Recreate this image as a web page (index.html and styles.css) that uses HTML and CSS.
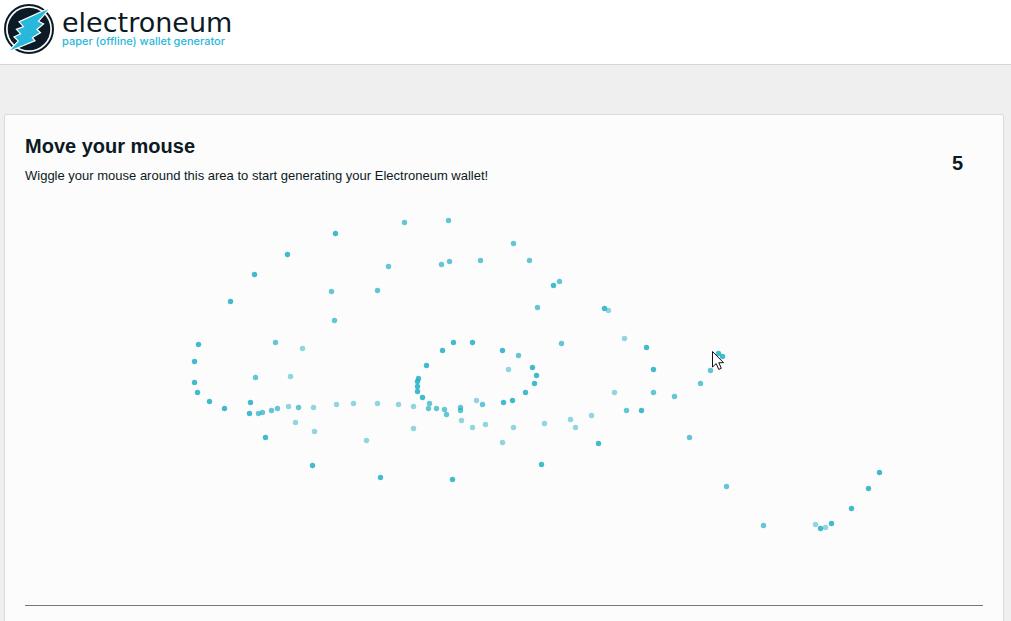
FILE: index.html
```
<!DOCTYPE html>
<html lang="en">
<head>
  <meta charset="UTF-8">
  <title>Electroneum Paper Wallet Generator</title>
  <meta name="viewport" content="width=device-width, initial-scale=1">
  <link rel="stylesheet" href="styles.css">
</head>

<body>
  <header class="site-header">
    <svg class="logo-mark" viewBox="0 0 52 52" aria-hidden="true">
      <circle cx="26" cy="26" r="24" fill="#fff" stroke="#0b1a24" stroke-width="2"/>
      <circle cx="26" cy="26" r="21.3" fill="#0b1a24"/>
      <path d="M45.5 6 L17 19 L21.5 24 L14.5 26.5 L18.5 31 L12 34 L16 38 L7 47.5 L31 37.5 L28.5 34.5 L36.5 29.5 L33 26.5 L39.5 21 L34.5 18.5 Z" fill="#2ab7dc" stroke="#fff" stroke-width="2.4" paint-order="stroke"/>
    </svg>
    <div class="logo-text">
      <div class="logo-name">electroneum</div>
      <div class="logo-tagline">paper (offline) wallet generator</div>
    </div>
  </header>

  <main class="panel">
    <div class="panel-head">
      <div>
        <h1>Move your mouse</h1>
        <p>Wiggle your mouse around this area to start generating your Electroneum wallet!</p>
      </div>
      <div id="counter">5</div>
    </div>

    <!-- Mouse trail, points are in client coordinates -->
    <svg id="trail" viewBox="25 200 958 405" preserveAspectRatio="xMinYMin meet" aria-hidden="true">
      <g id="dots" transform="translate(0.5 0.5)"></g>
      <path class="cursor" transform="translate(712 351)" d="M0.5 0.5 V16 L4.2 12.6 L6.8 18.4 L9.3 17.3 L6.8 11.7 H11.5 Z"/>
    </svg>
    <hr>
  </main>

  <script>
    const points = {
      light: [
        [302,348],[608,310],[624,338],[288,406],[313,407],[336,404],[353,403],[377,403],[398,404],
        [413,406],[295,422],[314,431],[366,440],[290,376],[413,428],[461,420],[472,427],[485,424],
        [476,400],[508,369],[513,427],[502,442],[544,423],[570,419],[575,427],[591,415],[614,392],
        [815,524],[825,527]
      ],
      mid: [
        [404,222],[388,266],[377,290],[331,291],[334,320],[275,342],[448,220],[513,243],[441,264],
        [449,261],[480,260],[529,260],[559,281],[537,307],[561,343],[258,413],[262,412],[271,410],
        [277,408],[298,407],[255,377],[429,403],[428,408],[436,408],[444,409],[446,414],[460,407],
        [460,410],[482,404],[518,355],[626,410],[653,392],[674,396],[689,437],[700,383],[710,370],
        [726,486],[763,525]
      ],
      strong: [
        [335,233],[287,254],[254,274],[230,301],[198,344],[553,285],[604,308],[453,342],[472,342],
        [194,361],[194,382],[197,392],[209,401],[224,408],[250,402],[249,413],[265,437],[312,465],
        [380,477],[442,350],[426,365],[418,378],[417,381],[417,386],[417,391],[422,397],[503,402],
        [512,400],[525,392],[534,383],[536,375],[532,367],[502,350],[541,464],[452,479],[598,443],
        [641,410],[646,347],[653,369],[718,353],[722,356],[820,528],[831,523],[851,508],[868,488],
        [879,472]
      ]
    };

    const dots = document.getElementById("dots");
    for (const age in points) {
      points[age].forEach(([x, y]) => {
        const dot = document.createElementNS("http://www.w3.org/2000/svg", "circle");
        dot.setAttribute("class", age);
        dot.setAttribute("cx", x);
        dot.setAttribute("cy", y);
        dot.setAttribute("r", 2.7);
        dots.appendChild(dot);
      });
    }
  </script>
</body>
</html>
```
FILE: styles.css
```
* { box-sizing: border-box; margin: 0; padding: 0; }

body {
  font-family: "Liberation Sans", Arial, sans-serif;
  font-size: 13px;
  background: #efefef;
  color: #0b1a24;
  overflow: hidden;
}

.site-header {
  display: flex;
  align-items: flex-start;
  gap: 7px;
  height: 65px;
  padding: 3px;
  background: #fff;
  border-bottom: 1px solid #d6d6d6;
}

.logo-mark {
  width: 52px;
  height: 52px;
}

.logo-text { padding-top: 9px; }

.logo-name {
  font-family: "DejaVu Sans", sans-serif;
  font-size: 27px;
  line-height: 22px;
}

.logo-tagline {
  font-family: Inter, sans-serif;
  font-size: 11px;
  font-weight: 500;
  line-height: 14px;
  color: #2ab7dc;
}

/* Panel */
.panel {
  margin: 49px 7px 0 4px;
  padding: 19px 20px 40px;
  background: #fcfcfc;
  border: 1px solid #dadada;
  border-radius: 2px;
}

.panel-head {
  display: flex;
  justify-content: space-between;
  height: 66px;
}

h1 {
  font-size: 20px;
  line-height: 24px;
  margin-bottom: 10px;
}

.panel-head p { line-height: 16px; }

#counter {
  padding: 17px 20px 0 0;
  font-size: 20px;
  font-weight: 700;
  line-height: 24px;
}

#trail {
  display: block;
  width: 100%;
  height: 405px;
}

#trail circle { fill: #22afc5; }
#trail .strong { opacity: 0.85; }
#trail .mid { opacity: 0.7; }
#trail .light { opacity: 0.5; }

.cursor {
  fill: #fff;
  stroke: #111;
}

hr {
  border: 0;
  border-top: 1px solid #777;
}
```
